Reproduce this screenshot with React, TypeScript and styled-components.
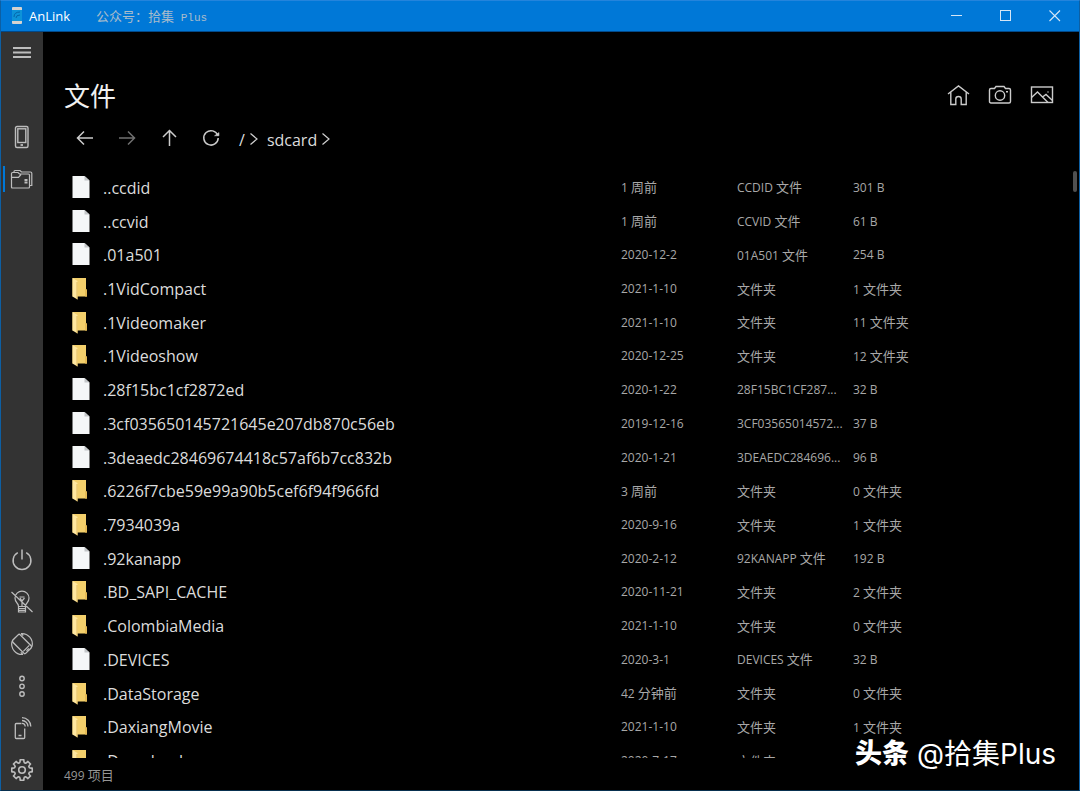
import React from 'react';
import styled, { createGlobalStyle } from 'styled-components';

const GlobalStyle = createGlobalStyle`
  * { box-sizing: border-box; }
  body {
    margin: 0;
    background: #000;
    font-family: 'Open Sans', 'Noto Sans CJK SC', sans-serif;
    color: #dcdcdc;
  }
`;

const Window = styled.div`
  position: relative;
  display: flex;
  flex-direction: column;
  height: 100vh;
  background: #000;
  &::after {
    content: '';
    position: absolute;
    inset: 0;
    border: 1px solid #0d5fa3;
    border-top-color: #2484dc;
    border-bottom-color: #08304f;
    pointer-events: none;
  }
`;

const TitleBar = styled.header`
  display: flex;
  align-items: center;
  height: 32px;
  flex: none;
  padding: 0 1px 0 8px;
  background: #0078d7;
  border-bottom: 1px solid #02498a;
`;

const AppName = styled.h1`
  margin: 0 0 0 5px;
  font-size: 13px;
  line-height: 20px;
  font-weight: 400;
  color: #fff;
`;

const Account = styled.span`
  margin: 4px 0 0 26px;
  font-family: 'Liberation Mono', 'Noto Sans CJK SC', monospace;
  font-size: 11px;
  line-height: 20px;
  color: #a9bccb;
`;

const Captions = styled.div`
  display: flex;
  margin-left: auto;
`;

const IconButton = styled.button<{ $w: number; $h: number; $dim?: boolean }>`
  display: flex;
  align-items: center;
  justify-content: center;
  width: ${(p) => p.$w}px;
  height: ${(p) => p.$h}px;
  padding: 0;
  border: 0;
  background: none;
  color: ${(p) => (p.$dim ? '#707070' : '#cccccc')};
`;

const CaptionButton = styled(IconButton)`
  color: #d4e6f6;
`;

const Body = styled.div`
  display: flex;
  flex: 1;
  min-height: 0;
`;

const Sidebar = styled.nav`
  display: flex;
  flex-direction: column;
  flex: none;
  width: 43px;
  background: #333;
`;

const SideButton = styled.button<{ $active?: boolean }>`
  display: flex;
  align-items: center;
  justify-content: center;
  height: 42px;
  width: 43px;
  padding: 0;
  border: 0;
  color: #bdbdbd;
  background: ${(p) =>
    p.$active ? 'linear-gradient(#0078d7, #0078d7) 3px center / 2px 26px no-repeat' : 'none'};
`;

const SideGroup = styled.div<{ $bottom?: boolean }>`
  margin-top: ${(p) => (p.$bottom ? 'auto' : '42px')};
`;

const Main = styled.main`
  display: flex;
  flex-direction: column;
  flex: 1;
  min-width: 0;
  padding-top: 42px;
`;

const PageHead = styled.div`
  display: flex;
  align-items: center;
  justify-content: space-between;
  height: 42px;
  padding: 0 17px 0 21px;
`;

const PageTitle = styled.h2`
  margin: 0;
  padding-top: 2px;
  font-size: 26px;
  line-height: 40px;
  font-weight: 400;
  color: #f0f0f0;
`;

const Row = styled.div`
  display: flex;
  align-items: center;
`;

const Toolbar = styled(Row)`
  height: 44px;
  padding-left: 21px;
`;

const Crumbs = styled(Row)`
  margin: 3px 0 0 7px;
  font-size: 16px;
  line-height: 24px;
`;

const Crumb = styled.a`
  color: #dcdcdc;
  text-decoration: none;
`;

const CrumbArrow = styled.svg<{ $gap: number }>`
  margin: 0 ${(p) => p.$gap}px 2px 4px;
`;

const ListArea = styled.div`
  display: flex;
  flex: 1;
  min-height: 0;
  margin-top: 11px;
  overflow: hidden;
`;

const Table = styled.table`
  flex: 1;
  min-width: 0;
  height: 607px;
  border-collapse: collapse;
  table-layout: fixed;
`;

const NameCell = styled.td`
  padding: 0 0 0 29px;
  font-size: 16px;
  line-height: 24px;
  white-space: nowrap;
`;

const NameBox = styled(Row)`
  gap: 12px;
  svg { flex: none; }
`;

const MetaCell = styled.td`
  padding: 0;
  font-size: 12px;
  line-height: 20px;
  color: #a8a8a8;
  white-space: nowrap;
`;

const Cjk = styled.span`
  font-size: 13px;
`;

const ScrollTrack = styled.div`
  flex: none;
  width: 7px;
`;

const ScrollThumb = styled.div`
  width: 4px;
  height: 21px;
  border-radius: 2px;
  background: #505050;
`;

const Status = styled.footer`
  height: 33px;
  padding: 7px 0 0 21px;
  font-size: 12px;
  line-height: 20px;
  color: #959595;
`;

const Watermark = styled.div`
  position: absolute;
  right: 24px;
  bottom: 17px;
  display: flex;
  gap: 8px;
  font-family: Inter, 'Noto Sans CJK SC', sans-serif;
  font-size: 28px;
  line-height: 40px;
  color: #fff;
  strong {
    font-size: 27px;
    font-weight: 900;
  }
`;

const Glyph = ({ children, w = 1.3 }: { children: React.ReactNode; w?: number }) => (
  <svg width="24" height="24" viewBox="0 0 24 24" fill="none" stroke="currentColor" strokeWidth={w} aria-hidden="true">
    {children}
  </svg>
);

const gearPath = (() => {
  const points: string[] = [];
  for (let i = 0; i < 8; i++) {
    const mid = (i * Math.PI) / 4;
    [[-0.3, 7.7], [-0.22, 8.8], [-0.18, 10.4], [0.18, 10.4], [0.22, 8.8], [0.3, 7.7]].forEach(([a, r]) => {
      points.push(`${(12 + r * Math.sin(mid + a)).toFixed(2)} ${(12 - r * Math.cos(mid + a)).toFixed(2)}`);
    });
  }
  return `M${points.join('L')}Z`;
})();

const Logo = () => (
  <svg width="16" height="20" viewBox="0 0 16 20" aria-hidden="true">
    <rect x="4" y="1" width="10" height="17" rx="1" fill="#0d93d8" />
    <path d="M4 4V2q0-1 1-1h8q1 0 1 1v2zM4 15v2q0 1 1 1h8q1 0 1-1v-2z" fill="#d5d2cf" />
    <path d="M6 11q0-5 6-5M8 12q0-3 4-3" fill="none" stroke="#0565a8" strokeWidth="1" />
  </svg>
);

const FileIcon = () => (
  <svg width="19" height="24" viewBox="0 1 19 24" aria-hidden="true">
    <path d="M.5 1h12L17.500 5.500V23H.5z" fill="#f5f7f8" />
    <path d="M12.500 1v4.500h5z" fill="#c3c6c8" />
  </svg>
);

const FolderIcon = () => (
  <svg width="19" height="24" viewBox="0 0 19 24" aria-hidden="true">
    <path d="M.5 1H14v11l1 1v6.500H.5z" fill="#f3cf6b" />
    <path d="M14 12l1 1v6.500h-2V12z" fill="#e5ba55" />
    <path d="M.5 1L5.500 4v18.500L.5 19.500z" fill="#ffe7a0" />
    <path d="M4.500 5v17l1 .500V5z" fill="#e3bd60" />
  </svg>
);

const Chevron = ({ gap }: { gap: number }) => (
  <CrumbArrow $gap={gap} width="10" height="14" viewBox="0 0 10 14" fill="none" stroke="#d0d0d0" strokeWidth="1.2" aria-hidden="true">
    <path d="M1.500 1.500l6.500 5.500-6.500 5.500" />
  </CrumbArrow>
);

type Entry = [name: string, date: string, type: string, size: string];

const entries: Entry[] = [
  ['..ccdid', '1 周前', 'CCDID 文件', '301 B'],
  ['..ccvid', '1 周前', 'CCVID 文件', '61 B'],
  ['.01a501', '2020-12-2', '01A501 文件', '254 B'],
  ['.1VidCompact', '2021-1-10', '文件夹', '1 文件夹'],
  ['.1Videomaker', '2021-1-10', '文件夹', '11 文件夹'],
  ['.1Videoshow', '2020-12-25', '文件夹', '12 文件夹'],
  ['.28f15bc1cf2872ed', '2020-1-22', '28F15BC1CF287...', '32 B'],
  ['.3cf035650145721645e207db870c56eb', '2019-12-16', '3CF03565014572...', '37 B'],
  ['.3deaedc28469674418c57af6b7cc832b', '2020-1-21', '3DEAEDC284696...', '96 B'],
  ['.6226f7cbe59e99a90b5cef6f94f966fd', '3 周前', '文件夹', '0 文件夹'],
  ['.7934039a', '2020-9-16', '文件夹', '1 文件夹'],
  ['.92kanapp', '2020-2-12', '92KANAPP 文件', '192 B'],
  ['.BD_SAPI_CACHE', '2020-11-21', '文件夹', '2 文件夹'],
  ['.ColombiaMedia', '2021-1-10', '文件夹', '0 文件夹'],
  ['.DEVICES', '2020-3-1', 'DEVICES 文件', '32 B'],
  ['.DataStorage', '42 分钟前', '文件夹', '0 文件夹'],
  ['.DaxiangMovie', '2021-1-10', '文件夹', '1 文件夹'],
  ['.Download', '2020-7-17', '文件夹', ''],
];

/* Chinese runs are set larger than the Latin text beside them. */
const Mixed = ({ text }: { text: string }) => (
  <>
    {text.split(/([\u4e00-\u9fff\uff1a]+)/).map((part, i) => (i % 2 ? <Cjk key={i}>{part}</Cjk> : part))}
  </>
);

export default function App() {
  return (
    <Window>
      <GlobalStyle />
      <TitleBar>
        <Logo />
        <AppName>AnLink</AppName>
        <Account><Mixed text="公众号：拾集 Plus" /></Account>
        <Captions>
          <CaptionButton $w={49} $h={31} aria-label="最小化">
            <Glyph w={1}><path d="M6 11.500h11" /></Glyph>
          </CaptionButton>
          <CaptionButton $w={49} $h={31} aria-label="最大化">
            <Glyph w={1}><rect x="6.500" y="6.500" width="10" height="10" /></Glyph>
          </CaptionButton>
          <CaptionButton $w={49} $h={31} aria-label="关闭">
            <Glyph w={1.1}><path d="M6.500 6.500L17 17M17 6.500L6.500 17" /></Glyph>
          </CaptionButton>
        </Captions>
      </TitleBar>
      <Body>
        <Sidebar>
          <SideButton aria-label="菜单">
            <Glyph w={2}><path d="M3 7h18M3 11.500h18M3 16h18" /></Glyph>
          </SideButton>
          <SideGroup>
            <SideButton aria-label="设备">
              <Glyph w={1.4}>
                <rect x="5.500" y="1.500" width="12.500" height="21" rx="1.500" />
                <rect x="7.800" y="3.800" width="8" height="13.700" />
                <path d="M10.500 20h2.500" strokeWidth="1.800" />
              </Glyph>
            </SideButton>
            <SideButton $active aria-label="文件">
              <Glyph w={1.2}>
                <path d="M1.500 20V6.500q0-1 1-1H8L9.500 7H18.500q1 0 1 1v12q0 1-1 1H2.500q-1 0-1-1zM1.500 10.300h7L11 7.500" />
                <path d="M4 5.500V4.500q0-1 1-1h5l1.500 1.500h9q1.300 0 1.300 1.300V18.500h-2.300" />
                <path d="M14.500 13h3M14.500 15.500h3" strokeWidth="1.800" />
              </Glyph>
            </SideButton>
          </SideGroup>
          <SideGroup $bottom>
            <SideButton aria-label="电源">
              <Glyph w={1.5}><path d="M12 1.500v10M7.800 4.700a8.900 8.900 0 1 0 8.400 0" /></Glyph>
            </SideButton>
            <SideButton aria-label="关闭屏幕">
              <Glyph w={1.2}>
                <path d="M8.500 16.500q0-2-1.500-3.500A7 7 0 1 1 17 13q-1.500 1.500-1.500 3.500zM8.500 16.500v5.500h7v-5.500M8.500 18.500h7M8.500 20.300h7M1.500 2l21 20M12 16v-5l-2-3M12 11l2.500-3M9.500 7h5" />
              </Glyph>
            </SideButton>
            <SideButton aria-label="旋转">
              <Glyph w={1.4}>
                <rect x="6.800" y="2.800" width="10.400" height="18.400" rx="1.500" transform="rotate(-45 12 12)" />
                <path d="M13.300 19.300l6-6M16.500 18.800l2.300-2.300" strokeWidth="1.200" />
                <path d="M11 1.600A10.400 10.400 0 0 1 22 14.500M13 22.400A10.400 10.400 0 0 1 2 9.500M11 1.600l2.200 2M13 22.400l-2.200-2" strokeWidth="1.200" />
              </Glyph>
            </SideButton>
            <SideButton aria-label="更多">
              <Glyph w={1.4}>
                <circle cx="12" cy="4.500" r="2.200" /><circle cx="12" cy="12.300" r="2.200" /><circle cx="12" cy="20" r="2.200" />
              </Glyph>
            </SideButton>
            <SideButton aria-label="无线连接">
              <Glyph w={1.3}>
                <path d="M11.500 7.500H6.300q-1 0-1 1v13q0 1 1 1h7.400q1 0 1-1V12.500M8.500 19.500h3" />
                <path d="M12 7.300a3.200 3.200 0 0 1 3.200 3.200M12 4.500a6 6 0 0 1 6 6M12 1.700a8.800 8.800 0 0 1 8.800 8.800" />
              </Glyph>
            </SideButton>
            <SideButton aria-label="设置">
              <Glyph w={1.6}><path d={gearPath} strokeLinejoin="round" /><circle cx="12" cy="12" r="3.300" /></Glyph>
            </SideButton>
          </SideGroup>
        </Sidebar>
        <Main>
          <PageHead>
            <PageTitle>文件</PageTitle>
            <Row>
              <IconButton $w={42} $h={42} aria-label="主页">
                <Glyph w={1.4}><path d="M2 11L12.500 3l10.500 8M4.800 9.200v12.300h5V16q0-2.500 2.700-2.500t2.700 2.500v5.500h5V9.200" /></Glyph>
              </IconButton>
              <IconButton $w={42} $h={42} aria-label="相机">
                <Glyph w={1.4}>
                  <path d="M3 5.500h3.500l1.500-2h8l1.500 2H21q1.500 0 1.500 1.500v11.500q0 1.500-1.500 1.500H3q-1.500 0-1.500-1.500V7q0-1.500 1.500-1.500z" />
                  <circle cx="12" cy="12.500" r="4.700" />
                  <path d="M18 8.800h2" />
                </Glyph>
              </IconButton>
              <IconButton $w={42} $h={42} aria-label="图片">
                <Glyph w={1.4}>
                  <rect x="1.500" y="4" width="21" height="15.500" />
                  <path d="M1.500 14.500l6-5.500 10.500 10.500M12.500 14l3.500-2.500 6.500 6M17.500 9h1" />
                </Glyph>
              </IconButton>
            </Row>
          </PageHead>
          <Toolbar>
            <IconButton $w={42} $h={42} aria-label="后退">
              <Glyph w={1.5}><path d="M20 12H4M11 5.500L4.500 12l6.500 6.500" /></Glyph>
            </IconButton>
            <IconButton $w={42} $h={42} $dim aria-label="前进">
              <Glyph w={1.5}><path d="M4 12h16M13 5.500l6.500 6.500-6.500 6.500" /></Glyph>
            </IconButton>
            <IconButton $w={42} $h={42} aria-label="上一级">
              <Glyph w={1.5}><path d="M12.500 20V4M6 11L12.500 4.500l6.500 6.500" /></Glyph>
            </IconButton>
            <IconButton $w={42} $h={42} aria-label="刷新">
              <Glyph w={1.5}><path d="M18.800 9.500a7.200 7.200 0 1 0 .4 2.500" /><path d="M15.500 9.800h4.500V6.500z" fill="currentColor" strokeWidth="0.500" /></Glyph>
            </IconButton>
            <Crumbs>
              <Crumb href="#root">/</Crumb>
              <Chevron gap={8} />
              <Crumb href="#sdcard">sdcard</Crumb>
              <Chevron gap={0} />
            </Crumbs>
          </Toolbar>
          <ListArea>
            <Table>
              <colgroup>
                <col />
                <col width="116" />
                <col width="116" />
                <col width="220" />
              </colgroup>
              <tbody>
                {entries.map(([name, date, type, size]) => (
                  <tr key={name}>
                    <NameCell>
                      <NameBox>
                        {type === '文件夹' ? <FolderIcon /> : <FileIcon />}
                        {name}
                      </NameBox>
                    </NameCell>
                    <MetaCell><Mixed text={date} /></MetaCell>
                    <MetaCell><Mixed text={type} /></MetaCell>
                    <MetaCell><Mixed text={size} /></MetaCell>
                  </tr>
                ))}
              </tbody>
            </Table>
            <ScrollTrack><ScrollThumb /></ScrollTrack>
          </ListArea>
          <Status><Mixed text="499 项目" /></Status>
        </Main>
      </Body>
      <Watermark><strong>头条</strong><span>@拾集Plus</span></Watermark>
    </Window>
  );
}
